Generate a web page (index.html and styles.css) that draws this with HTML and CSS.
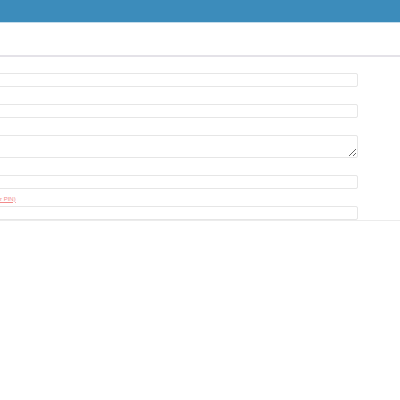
FILE: index.html
```html
<!DOCTYPE html>
<html lang="en">
<head>
<meta charset="utf-8">
<title>Account settings</title>
<link rel="stylesheet" href="styles.css">
</head>
<body>
  <header class="topbar"></header>
  <div class="subbar"></div>
  <main class="panel">
    <form class="form">
      <div class="field">
        <input class="control" type="text" aria-label="Name">
      </div>
      <div class="field">
        <input class="control" type="text" aria-label="Email">
      </div>
      <div class="field">
        <textarea class="control area" aria-label="Address"></textarea>
      </div>
      <div class="field">
        <input class="control" type="text" aria-label="Phone">
      </div>
      <div class="field">
        <div class="label">
          <a class="reset" href="#">(Reset your PIN)</a>
        </div>
        <input class="control" type="password" aria-label="Access PIN">
      </div>
    </form>
  </main>
</body>
</html>
```

FILE: styles.css
```css
* { box-sizing: border-box; }

body {
  margin: 0;
  background: #fff;
  font-family: "Liberation Sans", Arial, sans-serif;
}

.topbar {
  height: 23px;
  background: #3c8cbb;
  border-bottom: 1px solid #c4dceb;
}

.subbar {
  height: 34px;
  background: #fff;
  border-bottom: 2px solid #e4e2e8;
}

.panel {
  margin-left: -260px;
  width: 700px;
  border-bottom: 1px solid #ececec;
}

.form {
  display: flex;
  flex-direction: column;
  gap: 17px;
  padding-top: 16px;
  padding-right: 82px;
}

.field {
  display: flex;
  flex-direction: column;
}

.field:last-child {
  margin-top: -17px;
}

.label {
  height: 17px;
  display: flex;
  align-items: center;
  padding-top: 2px;
  font-size: 6px;
}

.reset {
  margin-left: 231px;
  color: #f28b8b;
  text-decoration: underline;
}

.control {
  display: block;
  width: 100%;
  height: 14px;
  margin: 0;
  padding: 0 4px;
  border: 1px solid #e6e6e6;
  border-radius: 2px;
  background: #fff;
  font: 6px "Liberation Sans", Arial, sans-serif;
  outline: none;
}

.area {
  height: 23px;
  resize: vertical;
}
```
